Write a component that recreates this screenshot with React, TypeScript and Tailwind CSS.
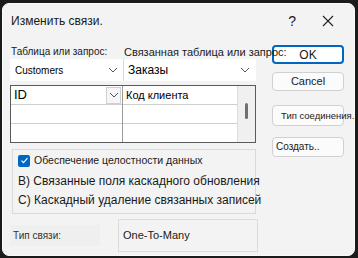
import React from "react";

const font = { fontFamily: '"Liberation Sans", Arial, sans-serif' };

function Chevron({ className = "" }: { className?: string }) {
  return (
    <svg width="10" height="6" viewBox="0 0 10 6" className={className}>
      <path d="M1 1l4 4 4-4" fill="none" stroke="#555" strokeWidth="1" />
    </svg>
  );
}

export default function App() {
  return (
    <div className="w-[358px] h-[258px] bg-[#1b1b1b] pl-[2px] pt-[3px] pr-[3px] pb-[2px] whitespace-nowrap" style={font}>
      <div className="h-full rounded-[7px] bg-[#f3f3f3] border border-[#fafafa] flex flex-col">
        {/* title bar */}
        <div className="h-[41px] flex items-start pt-[9px] pl-[8px] pr-[20px] text-[#1a1a1a]">
          <span className="text-[12px] leading-[16px]">Изменить связи.</span>
          <span className="ml-auto text-[14px] leading-[16px] mr-[26px]">?</span>
          <svg width="12" height="12" viewBox="0 0 12 12" className="mt-[2px]">
            <path d="M1 1l10 10M11 1L1 11" stroke="#222" strokeWidth="1.1" />
          </svg>
        </div>

        <div className="flex pl-[7px]">
          {/* left column */}
          <div className="w-[246px] flex flex-col">
            <div className="flex h-[14px] leading-[14px] text-[#1a1a1a] pl-[1px]">
              <span className="w-[113px] shrink-0 text-[10px]">Таблица или запрос:</span>
              <span className="shrink-0 text-[11px] relative z-10">Связанная таблица или запрос:</span>
            </div>
            <div className="flex h-[22px] bg-white">
              <div className="w-[114px] flex items-center pl-[5px] pr-[5px] border-r border-[#d8d8d8]">
                <span className="text-[10px]">Customers</span>
                <Chevron className="ml-auto" />
              </div>
              <div className="flex-1 flex items-center pl-[4px] pr-[6px]">
                <span className="text-[12px]">Заказы</span>
                <Chevron className="ml-auto" />
              </div>
            </div>

            {/* field grid */}
            <div className="mt-[4px] h-[58px] border border-[#5a5a5a] bg-white flex">
              <div className="w-[112px] flex flex-col border-r border-[#9a9a9a]">
                <div className="h-[19px] flex items-center pl-[3px] border-b border-[#cfcfcf]">
                  <span className="text-[13px]">ID</span>
                  <div className="ml-auto mr-[1px] w-[15px] h-[17px] border border-[#d0d0d0] bg-[#f6f6f6] flex items-center justify-center">
                    <Chevron />
                  </div>
                </div>
                <div className="h-[19px] border-b border-[#cfcfcf]" />
                <div className="flex-1" />
              </div>
              <div className="flex-1 flex flex-col">
                <div className="h-[19px] flex items-center pl-[3px] border-b border-[#cfcfcf]">
                  <span className="text-[11px]">Код клиента</span>
                </div>
                <div className="h-[19px] border-b border-[#cfcfcf]" />
                <div className="flex-1" />
              </div>
              <div className="w-[18px] bg-[#f0f0f0] border-l border-[#dcdcdc] flex justify-center pt-[17px]">
                <div className="w-[3px] h-[16px] rounded-full bg-[#707070]" />
              </div>
            </div>

            {/* integrity group */}
            <div className="mt-[6px] ml-[2px] h-[65px] border border-[#dadada] flex flex-col pl-[5px]">
              <div className="h-[19px] flex items-center gap-[4px] pt-[2px]">
                <div className="w-[12px] h-[12px] rounded-[2px] bg-[#0067c0] flex items-center justify-center">
                  <svg width="9" height="9" viewBox="0 0 9 9">
                    <path d="M1.5 4.6l2 2 4-4.4" fill="none" stroke="#fff" strokeWidth="1.2" />
                  </svg>
                </div>
                <span className="text-[10.5px] text-[#1a1a1a]">Обеспечение целостности данных</span>
              </div>
              <div className="h-[21px] flex items-center text-[12px] text-[#1a1a1a] pt-[3px]">
                B) Связанные поля каскадного обновления
              </div>
              <div className="h-[20px] flex items-center text-[12px] text-[#1a1a1a]">
                C) Каскадный удаление связанных записей
              </div>
            </div>

            {/* relation type */}
            <div className="mt-[5px] h-[33px] flex items-center">
              <div className="w-[90px] h-[21px] bg-[#efefef] flex items-center pl-[3px]">
                <span className="text-[10px] text-[#333]">Тип связи:</span>
              </div>
              <div className="ml-[18px] flex-1 h-full border border-[#dcdcdc] flex items-center pl-[4px] mr-[-2px]">
                <span className="text-[11px] text-[#1a1a1a]">One-To-Many</span>
              </div>
            </div>
          </div>

          {/* right buttons */}
          <div className="ml-[16px] w-[72px] flex flex-col">
            <button className="h-[19px] rounded-[4px] border-2 border-[#0067c0] bg-white text-[12px] leading-none text-[#1a1a1a]">
              OK
            </button>
            <button className="mt-[8px] h-[19px] rounded-[4px] border border-[#d0d0d0] bg-[#fbfbfb] text-[11px] leading-none text-[#1a1a1a]">
              Cancel
            </button>
            <button className="mt-[14px] h-[21px] rounded-[4px] border border-[#d0d0d0] bg-[#fbfbfb] text-[9.5px] leading-none text-[#1a1a1a] text-left pl-[8px]">
              Тип соединения.
            </button>
            <button className="mt-[11px] h-[20px] rounded-[4px] border border-[#d0d0d0] bg-[#fbfbfb] text-[10px] leading-none text-[#1a1a1a] text-left pl-[3px]">
              Создать..
            </button>
          </div>
        </div>
      </div>
    </div>
  );
}
